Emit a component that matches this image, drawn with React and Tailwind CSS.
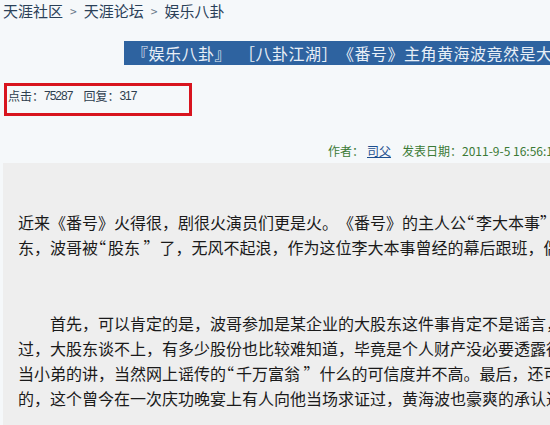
import React from "react";

function Line({ text }) {
  const parts = text.split("“");
  return (
    <div>
      {parts.map((p, i) => (
        <React.Fragment key={i}>
          {i > 0 && <span className="[font-feature-settings:'halt'] mr-[2px]">“</span>}
          {p}
        </React.Fragment>
      ))}
    </div>
  );
}

export default function App() {
  const p1 = [
    "近来《番号》火得很，剧很火演员们更是火。《番号》的主人公“李大本事”黄海波被曝是某企业的大股",
    "东，波哥被“股东 ”了，无风不起浪，作为这位李大本事曾经的幕后跟班，偶这个",
  ];
  const p2 = [
    "\u3000\u3000首先，可以肯定的是，波哥参加是某企业的大股东这件事肯定不是谣言，不",
    "过，大股东谈不上，有多少股份也比较难知道，毕竟是个人财产没必要透露得",
    "当小弟的讲，当然网上谣传的“千万富翁 ”什么的可信度并不高。最后，还可",
    "的，这个曾今在一次庆功晚宴上有人向他当场求证过，黄海波也豪爽的承认过",
  ];
  return (
    <div className="w-[550px] h-[425px] overflow-hidden bg-[#f5f8fa] font-['Noto_Sans_CJK_SC',sans-serif] [text-spacing-trim:space-all] relative">
      <div className="pl-[3px] pt-[2px] h-[20px] text-[15px] leading-[18px] text-[#2a4058] whitespace-nowrap flex items-center gap-[7px]">
        <span>天涯社区</span>
        <span className="text-[12px] text-[#6a7a8a]">&gt;</span>
        <span>天涯论坛</span>
        <span className="text-[12px] text-[#6a7a8a]">&gt;</span>
        <span>娱乐八卦</span>
      </div>
      <div className="mt-[21px] ml-[124px] h-[24px] bg-[#2e63a0] text-[#e8eff7] text-[16px] tracking-[0.5px] leading-[24px] pl-[8px] whitespace-nowrap overflow-hidden">
        『娱乐八卦』<span className="ml-[8px]">［八卦江湖］《番号》主角黄海波竟然是大股东</span>
      </div>
      <div className="mt-[18px] ml-[4px] w-[188px] h-[33px] border-[3px] border-[#d8141e] text-[12px] leading-[16px] text-[#2e3e4e] pt-[2px] pl-[1px] whitespace-nowrap flex items-start">
        <span>点击：</span>
        <span className="font-['Liberation_Sans',sans-serif] tracking-[-1px]">75287</span>
        <span className="ml-[11px]">回复：</span>
        <span className="font-['Liberation_Sans',sans-serif] tracking-[-1px]">317</span>
      </div>
      <div className="mt-[27px] pl-[328px] h-[20px] text-[12px] leading-[16px] text-[#3b7a35] whitespace-nowrap overflow-hidden">
        作者：<span className="ml-[3px] text-[#1d4f8f] underline">司父</span>
        <span className="ml-[11px]">发表日期：</span>2011-9-5 16:56:12
      </div>
      <div className="ml-[3px] h-[300px] bg-[#eeeeee] pt-[47px] pl-[15px] text-[16px] leading-[25px] text-[#1a1a1a] whitespace-nowrap overflow-hidden">
        {p1.map((l, i) => (
          <Line key={i} text={l} />
        ))}
        <div className="mt-[51px]">
          {p2.map((l, i) => (
            <Line key={i} text={l} />
          ))}
        </div>
      </div>
    </div>
  );
}
